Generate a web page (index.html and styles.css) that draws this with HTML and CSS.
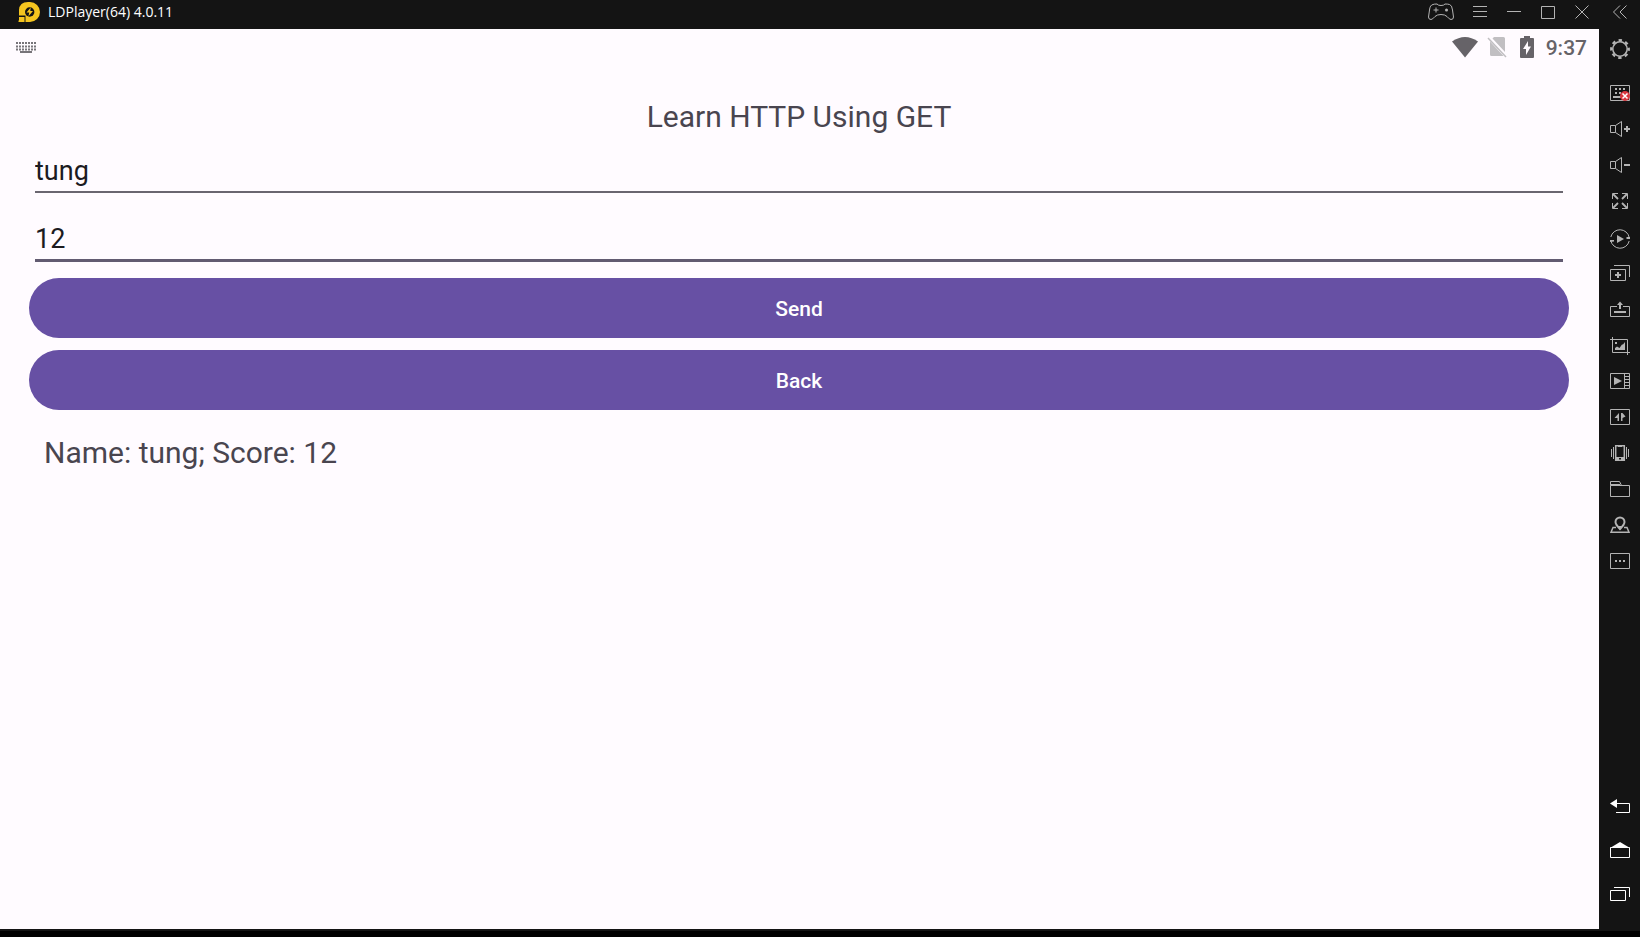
FILE: index.html
```html
<!DOCTYPE html>
<html lang="en">
<head>
<meta charset="utf-8">
<title>LDPlayer</title>
<link rel="stylesheet" href="styles.css">
</head>
<body>
<div class="window">
  <div class="player">
    <header class="titlebar">
      <svg class="logo" width="22" height="22" viewBox="0 0 22 22"><path fill="#f5c51f" d="M1 14.500V9Q1.500 1 10 1H12A10 10 0 0 1 12 21H7.500V14.500zM1 16h5.500V21H.5V19.500H1z"/><circle cx="11.700" cy="11" r="4.700" fill="#141414"/><path fill="#f5c51f" d="M12.700 6.500 8.500 11.600h2.700l-.7 3.700 4.500-5.200h-2.700z"/></svg>
      <span class="app-name">LDPlayer(64) 4.0.11</span>
      <div class="window-buttons">
        <button class="win-btn wide" aria-label="Gamepad"><svg width="26" height="18" viewBox="0 0 26 18"><path d="M5 1.500Q6 1 9 1Q10 2.500 13 2.500T17 1Q20 1 21.500 1.500Q24 2 24.500 7L25.500 14Q25.500 16.500 23 16.500Q21.500 16.500 19 13.500Q17 11.500 13 11.500T7 13.500Q4.500 16.500 3 16.500Q.5 16.500.5 14L1.500 7Q2 2 5 1.500ZM8 4.500v5M5.500 7h5"/><circle class="solid" cx="18.500" cy="7" r="1.500"/></svg></button>
        <button class="win-btn" aria-label="Menu"><svg width="14" height="14" viewBox="0 0 14 14"><path d="M0 1.500h14M0 6.500h14M0 11.500h14"/></svg></button>
        <button class="win-btn" aria-label="Minimize"><svg width="14" height="14" viewBox="0 0 14 14"><path d="M0 6.500h14"/></svg></button>
        <button class="win-btn" aria-label="Maximize"><svg width="14" height="14" viewBox="0 0 14 14"><path d="M.5 1.500h13v12H.5z"/></svg></button>
        <button class="win-btn" aria-label="Close"><svg width="14" height="14" viewBox="0 0 14 14"><path d="M.5.500l13 13M13.500.500l-13 13"/></svg></button>
      </div>
    </header>
    <div class="screen">
      <div class="statusbar">
        <svg width="20" height="12" viewBox="0 0 20 12"><path fill="none" stroke="#777479" stroke-width="2" stroke-dasharray="2 1" d="M0 1h20M0 4.500h20M0 7.500h20"/><path fill="#777479" d="M4 9h12v2H4z"/></svg>
        <div class="status-right">
          <svg width="26" height="22" viewBox="0 0 26 22"><path fill="#666368" d="M0 5.500Q13-3.500 26 5.500L13 21.500z"/></svg>
          <svg width="20" height="22" viewBox="0 0 20 22"><path fill="#c1bfc2" d="M7 1h9.500q1.500 0 1.500 1.500V16L5.500 2.500zM3 5.500 16.500 20H4.500Q3 20 3 18.500z"/><path stroke="#c1bfc2" stroke-width="1.500" d="M1 2l18 19"/></svg>
          <svg class="battery" width="14" height="22" viewBox="0 0 14 22"><path fill="#666368" d="M4 0h6v2h3q1 0 1 1v18q0 1-1 1H1q-1 0-1-1V3q0-1 1-1h3z"/><path fill="#fffbff" d="M8 5v5.500h3L6 19v-6H3z"/></svg>
          <span class="clock">9:37</span>
        </div>
      </div>
      <main class="form">
        <h1 class="heading">Learn HTTP Using GET</h1>
        <input class="field" type="text" aria-label="Name" value="tung">
        <input class="field active" type="text" aria-label="Score" value="12">
        <button class="action send">Send</button>
        <button class="action">Back</button>
        <p class="result">Name: tung; Score: 12</p>
      </main>
    </div>
  </div>
  <aside class="toolbar">
    <button class="tool collapse" aria-label="Collapse"><svg width="20" height="20" viewBox="0 0 20 20"><path d="M10 3.500 3.500 10l6.500 6.500M16.500 3.500 10 10l6.500 6.500"/></svg></button>
    <button class="tool gear" aria-label="Settings"><svg width="20" height="20" viewBox="0 0 20 20"><circle cx="10" cy="10" r="7.200" stroke-width="1.500"/><circle cx="10" cy="10" r="8.700" stroke-width="2.400" stroke-dasharray="3.400 3.433" stroke-dashoffset="1.700"/></svg></button>
    <button class="tool" aria-label="Keyboard mapping"><svg width="20" height="20" viewBox="0 0 20 20"><path d="M.5 2.500h19v15H.5z"/><path class="solid" d="M5 5h2v2H5zM9 5h2v2H9zM13 5h2v2h-2zM5 9h2v2H5zM9 9h2v2H9zM3 13h8v2H3z"/><circle cx="15" cy="13" r="5" fill="#d9363e" stroke="none"/><path stroke="#fff" stroke-width="1.500" d="M12.500 10.500l5 5M17.500 10.500l-5 5"/></svg></button>
    <button class="tool" aria-label="Volume up"><svg width="20" height="20" viewBox="0 0 20 20"><path d="M.5 6.500h5v7H.5zM5.500 6.500l6-4v15l-6-4"/><path stroke-width="2" d="M14 10h6M17 7v6"/></svg></button>
    <button class="tool" aria-label="Volume down"><svg width="20" height="20" viewBox="0 0 20 20"><path d="M.5 6.500h5v7H.5zM5.500 6.500l6-4v15l-6-4"/><path stroke-width="2" d="M14 10h6"/></svg></button>
    <button class="tool" aria-label="Full screen"><svg width="20" height="20" viewBox="0 0 20 20"><path d="M2.500 8V2.500H8M12 2.500h5.500V8M17.500 12v5.500H12M8 17.500H2.500V12"/><path stroke-width="1.800" d="M3 3l5 5M17 3l-5 5M17 17l-5-5M3 17l5-5"/></svg></button>
    <button class="tool low" aria-label="Restart"><svg width="20" height="20" viewBox="0 0 20 20"><path d="M.8 8A9.400 9.400 0 0 1 19.200 8.500M19.200 12A9.400 9.400 0 0 1 .8 11.500"/><path class="solid" d="M7 6l7 4-7 4zM16.500 8H20v2h-3.500zM0 11h4v1.500L0 13z"/></svg></button>
    <button class="tool" aria-label="Multi-instance"><svg width="20" height="20" viewBox="0 0 20 20"><path d="M.5 6.500h15v11H.5zM4 2.500h15.500V14"/><path stroke-width="2" d="M5 12h6M8 9v6"/></svg></button>
    <button class="tool" aria-label="Install APK"><svg width="20" height="20" viewBox="0 0 20 20"><path d="M7 7.500H.5v10h19v-10H13"/><path stroke-width="2" d="M4 13h12M10 10V5"/><path class="solid" d="M7 6l3-3.500L13 6z"/></svg></button>
    <button class="tool" aria-label="Screenshot"><svg width="20" height="20" viewBox="0 0 20 20"><path d="M0 4.500h17.500V20M2.500 2v15.500H20"/><path class="solid" d="M5 7h2v2H5zM5 15v-2l2-1.500L9.500 13 12 9.500h1L15 7v8z"/></svg></button>
    <button class="tool" aria-label="Record video"><svg width="20" height="20" viewBox="0 0 20 20"><path d="M.5 2.500h19v15H.5zM14.500 2v16M15 5.500h5M15 8.500h5M15 11.500h5M15 14.500h5"/><path class="solid" d="M4 6l8 4-8 4z"/></svg></button>
    <button class="tool" aria-label="Synchronizer"><svg width="20" height="20" viewBox="0 0 20 20"><path d="M.5 2.500h19v15H.5z"/><path class="solid" d="M9 6v8H7.500v-3H4.500zM11 14V6h1.500l3 3.500-3 1.500v3z"/></svg></button>
    <button class="tool" aria-label="Shake"><svg width="20" height="20" viewBox="0 0 20 20"><path stroke-width="1.500" d="M5.700 2.700h8.600v14.600H5.700z"/><path d="M1.500 6v8M3.500 4v12M16.500 4v12M18.500 6v8M8 3.500h4M5 14.500h10"/><path class="solid" d="M6 14h3v3H6zM11 14h3v3h-3z"/></svg></button>
    <button class="tool" aria-label="Shared folder"><svg width="20" height="20" viewBox="0 0 20 20"><path d="M.5 6.500h19v11H.5zM.5 6.500v-4h9l2 4M1 5.500h9"/></svg></button>
    <button class="tool" aria-label="Virtual GPS"><svg width="20" height="20" viewBox="0 0 20 20"><path stroke-width="2" d="M10 14Q5.500 9.500 5.500 7a4.500 4.500 0 0 1 9 0Q14.500 9.500 10 14z"/><path class="solid" d="M7 11h6l-3 4z"/><path stroke-width="1.500" d="M6 12.500H3L1 17.200h18L17 12.500h-3"/></svg></button>
    <button class="tool" aria-label="More"><svg width="20" height="20" viewBox="0 0 20 20"><path d="M.5 2.500h19v15H.5z"/><path class="solid" d="M5 9h2v2H5zM9 9h2v2H9zM13 9h2v2h-2z"/></svg></button>
    <nav class="nav-keys">
      <button class="tool nav" aria-label="Back key"><svg width="20" height="20" viewBox="0 0 20 20"><path d="M6 7.500h13.500v9H6"/><path class="solid" d="M0 7.500 7 3v9z"/></svg></button>
      <button class="tool nav" aria-label="Home key"><svg width="20" height="20" viewBox="0 0 20 20"><path d="M.5 7.500h19v10H.5z"/><path class="solid" d="M0 8l10-6 10 6z"/></svg></button>
      <button class="tool nav" aria-label="Recent apps"><svg width="20" height="20" viewBox="0 0 20 20"><path d="M.5 6.500h15v10H.5zM4 3.500h15.500V13"/></svg></button>
    </nav>
  </aside>
</div>
</body>
</html>
```

FILE: styles.css
```css
* {
  box-sizing: border-box;
}

body {
  margin: 0;
  background: #000;
  font-family: Roboto, sans-serif;
}

button {
  border: 0;
  padding: 0;
  font-family: inherit;
  cursor: pointer;
}

svg {
  display: block;
}

.window {
  display: flex;
  min-height: 100vh;
  background: #141414;
  border-bottom: 6px solid #000;
}

.player {
  flex: 1;
  display: flex;
  flex-direction: column;
  padding-bottom: 2px;
}

.titlebar {
  display: flex;
  align-items: flex-start;
  height: 29px;
  padding-left: 18px;
}

.logo {
  margin-top: 1px;
}

.app-name {
  margin-left: 8px;
  font: 14px/24px "Open Sans", sans-serif;
  color: #fff;
}

.window-buttons {
  display: flex;
  margin-left: auto;
}

.win-btn,
.tool {
  display: flex;
  align-items: center;
  justify-content: center;
  background: none;
  color: #b4b4b4;
}

.win-btn {
  width: 34px;
  height: 24px;
}

.win-btn.wide {
  width: 44px;
}

.win-btn svg,
.tool svg {
  fill: none;
  stroke: currentColor;
}

.win-btn .solid,
.tool .solid {
  fill: currentColor;
  stroke: none;
}

.screen {
  flex: 1;
  background: #fffbff;
}

.statusbar {
  display: flex;
  align-items: center;
  justify-content: space-between;
  height: 36px;
  padding: 2px 12px 0 16px;
}

.status-right {
  display: flex;
  align-items: center;
  gap: 9px;
}

.status-right svg {
  margin-bottom: 2px;
}

.status-right .battery {
  margin-left: 4px;
}

.clock {
  margin-left: 3px;
  font-size: 21px;
  font-weight: 500;
  line-height: 24px;
  color: #666368;
}

.form {
  display: flex;
  flex-direction: column;
  padding: 34px 30px 0 29px;
}

.heading {
  margin: 0 0 11px;
  font-size: 30px;
  font-weight: 400;
  line-height: 35px;
  text-align: center;
  color: #49454f;
}

.field {
  margin: 0 6px 20px;
  padding: 10px 0 4px;
  border: 0;
  border-bottom: 2px solid #6a6670;
  background: none;
  outline: 0;
  font: 27px/32px Roboto, sans-serif;
  color: #1c1b1f;
}

.field.active {
  margin-bottom: 16px;
  border-bottom: 3px solid #625b71;
}

.action {
  height: 60px;
  padding-top: 2px;
  border-radius: 30px;
  background: #6750a4;
  color: #fff;
  font-size: 21px;
  font-weight: 500;
}

.send {
  margin-bottom: 12px;
}

.result {
  margin: 25px 15px 0;
  font-size: 30px;
  line-height: 35px;
  color: #49454f;
}

.toolbar {
  display: flex;
  flex-direction: column;
  width: 41px;
}

.tool {
  width: 41px;
  height: 36px;
}

.collapse {
  height: 24px;
}

.gear {
  height: 51px;
  padding-bottom: 2px;
}

.low {
  padding-top: 4px;
}

.nav {
  height: 44px;
  color: #fff;
}

.nav-keys {
  margin-top: auto;
  padding-bottom: 15px;
}
```
